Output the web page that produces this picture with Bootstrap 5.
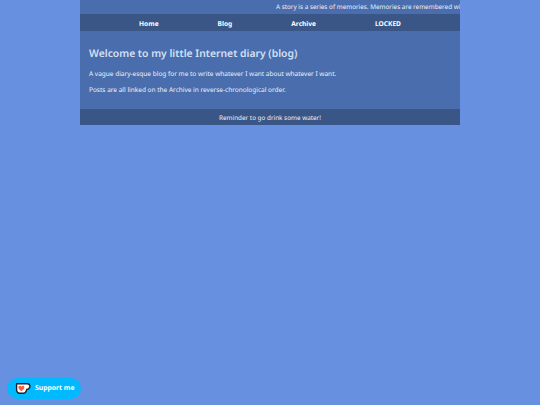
<!DOCTYPE html>
<html lang="en">
<head>
<meta charset="utf-8">
<title>Diary</title>
<link href="https://cdn.jsdelivr.net/npm/bootstrap@5.3.0/dist/css/bootstrap.min.css" rel="stylesheet">
<style>
html,body{height:100%;}
body{background:#6890e0;color:#eef2fa;font-family:"Noto Sans",Lato,sans-serif;font-size:6.5px;overflow:hidden;text-rendering:geometricPrecision;}
.shell{width:380px;background:#4a6dad;}
.ticker{height:14px;line-height:13px;overflow:hidden;white-space:nowrap;padding-left:196px;font-size:6.35px;}
.topnav{height:17px;background:#3a5687;gap:59px;padding-top:2px;}
.topnav a{color:#fff;font-weight:700;font-size:6.6px;text-decoration:none;}
.intro{height:78px;padding:16px 9px 0;}
.intro h1{font-size:10.35px;font-weight:600;color:#d3e0f6;margin:0 0 8.5px;line-height:14px;}
.intro p{margin:0 0 9px;line-height:7px;font-size:6.5px;}
.foot{height:16px;background:#3a5687;font-size:6.35px;padding-top:1px;}
.kofi{position:fixed;left:7px;top:378px;width:74px;height:21px;border-radius:11px;background:#00b9fe;color:#fff;font-weight:700;font-size:6.8px;gap:4px;padding-left:8px;}
</style>
</head>
<body>
<div class="shell mx-auto">
  <div class="ticker">A story is a series of memories. Memories are remembered with love and a little bit of time</div>
  <nav class="topnav d-flex justify-content-center align-items-center">
    <a href="#">Home</a><a href="#">Blog</a><a href="#">Archive</a><a href="#">LOCKED</a>
  </nav>
  <main class="intro">
    <h1>Welcome to my little Internet diary (blog)</h1>
    <p>A vague diary-esque blog for me to write whatever I want about whatever I want.</p>
    <p>Posts are all linked on the Archive in reverse-chronological order.</p>
  </main>
  <footer class="foot d-flex justify-content-center align-items-center">Reminder to go drink some water!</footer>
</div>
<div class="kofi d-flex align-items-center">
  <svg width="16" height="13" viewBox="0 0 15 12" aria-hidden="true">
    <path d="M1.5 1.5H11.5C13.5 1.5 14 3 14 4S13 6.8 11 6.8C10.6 9 9.5 10.5 7.5 10.5H4.5C2.5 10.5 1.5 9 1.5 7Z" fill="#fff" stroke="#222" stroke-width="1.3"/>
    <path d="M6 8.4C4.3 7.2 3.2 6.2 3.2 4.8C3.2 3.4 5.2 3 6 4.3C6.8 3 8.8 3.4 8.8 4.8C8.8 6.2 7.7 7.2 6 8.4Z" fill="#ff5a3c"/>
  </svg>
  <span>Support me</span>
</div>
<script src="https://cdn.jsdelivr.net/npm/bootstrap@5.3.0/dist/js/bootstrap.bundle.min.js"></script>
</body>
</html>
